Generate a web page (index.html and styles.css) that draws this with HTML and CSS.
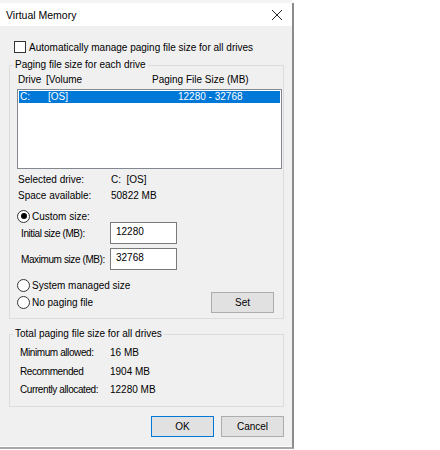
FILE: index.html
```html
<!DOCTYPE html>
<html>
<head>
<meta charset="utf-8">
<link rel="stylesheet" href="styles.css">
</head>
<body>
<div class="ghost"><span class="ghost-text"><span class="g1">Visual Effects</span><span class="g2">Advanced</span><span class="g3">Data Execution Prevention</span></span></div>
<div class="window">
  <div class="titlebar">
    <span class="title">Virtual Memory</span>
    <svg class="close" width="12" height="12" viewBox="0 0 12 12"><path d="M1 1 L11 11 M11 1 L1 11" stroke="#222" stroke-width="1"/></svg>
  </div>
  <div class="body">
    <div class="check-row"><span class="checkbox"></span><span>Automatically manage paging file size for all drives</span></div>
    <fieldset class="group group-a">
      <legend>Paging file size for each drive</legend>
      <div class="list-head"><span class="c1">Drive</span><span class="c2">[Volume</span><span class="c3">Paging File Size (MB)</span></div>
      <div class="listbox">
        <div class="lrow selected"><span class="c1">C:</span><span class="c2">[OS]</span><span class="c3">12280 - 32768</span></div>
      </div>
      <div class="info">
        <span>Selected drive:</span><span>C:&nbsp;&nbsp;[OS]</span>
        <span>Space available:</span><span>50822 MB</span>
      </div>
      <div class="radio-row r-custom"><span class="radio checked"></span><span>Custom size:</span></div>
      <div class="size-grid">
        <span class="tight">Initial size (MB):</span><div class="input">12280</div>
        <span class="tight">Maximum size (MB):</span><div class="input">32768</div>
      </div>
      <div class="radio-row r-system"><span class="radio"></span><span>System managed size</span></div>
      <div class="last-row">
        <div class="radio-row"><span class="radio"></span><span>No paging file</span></div>
        <div class="btn set">Set</div>
      </div>
    </fieldset>
    <fieldset class="group group-b">
      <legend>Total paging file size for all drives</legend>
      <div class="totals">
        <span class="tight">Minimum allowed:</span><span>16 MB</span>
        <span class="tight">Recommended</span><span>1904 MB</span>
        <span class="tight">Currently allocated:</span><span>12280 MB</span>
      </div>
    </fieldset>
    <div class="buttons">
      <div class="btn default">OK</div>
      <div class="btn">Cancel</div>
    </div>
  </div>
</div>
</body>
</html>
```

FILE: styles.css
```css
html, body {
  margin: 0;
  padding: 0;
  background: #ffffff;
}
body {
  font-family: "Liberation Sans", Arial, sans-serif;
  font-size: 10px;
  color: #000;
}
.ghost {
  height: 3px;
  width: 292px;
  overflow: hidden;
  background: #f4f4f4;
}
.ghost-text {
  display: flex;
  margin-top: -10px;
  line-height: 12px;
  color: #333;
  white-space: nowrap;
}
.g1 { margin-left: -4px; }
.g2 { margin-left: 16px; }
.g3 { margin-left: 14px; }

.window {
  width: 292px;
  border-right: 2px solid #8c8c8c;
  border-bottom: 2px solid #a8a8a8;
  background: #fff;
}
.titlebar {
  height: 23px;
  display: flex;
  align-items: center;
  justify-content: space-between;
  padding: 0 9px 0 6px;
  background: #fff;
  font-size: 10.5px;
}
.close { display: block; }
.body {
  background: #f0f0f0;
  height: 420px;
  box-sizing: border-box;
  padding: 13px 8px 0 9px;
  margin-bottom: 1px;
  display: flex;
  flex-direction: column;
}
.check-row {
  display: flex;
  align-items: center;
  height: 16px;
  padding-left: 5px;
}
.checkbox {
  width: 10px;
  height: 10px;
  border: 1px solid #333;
  background: #fff;
  margin-right: 3px;
}
.group {
  margin: 0;
  padding: 0 1px 0 7px;
  border: 1px solid #dcdcdc;
  min-width: 0;
}
.group legend {
  padding: 0 2px;
  margin-left: -4px;
  line-height: 16px;
}
.group-a {
  margin-top: 2px;
  padding-bottom: 6px;
}
.list-head {
  display: flex;
  line-height: 15px;
  margin-top: -1px;
  padding-left: 1px;
}
.c1 { width: 28px; }
.c2 { width: 106px; }
.listbox {
  margin-top: 2px;
  height: 80px;
  box-sizing: border-box;
  border: 1px solid #828790;
  background: #fff;
  padding: 1px;
}
.lrow {
  display: flex;
  height: 12px;
  line-height: 12px;
  padding-left: 1px;
}
.lrow .c2 { width: 130px; }
.lrow.selected {
  background: #0078d7;
  color: #fff;
}
.info {
  display: grid;
  grid-template-columns: 93px auto;
  line-height: 16px;
  margin-top: 3px;
  padding-left: 1px;
  white-space: nowrap;
}
.radio-row {
  display: flex;
  align-items: center;
  height: 14px;
  white-space: nowrap;
}
.radio {
  width: 11px;
  height: 11px;
  border: 1px solid #333;
  border-radius: 50%;
  background: #fff;
  margin-right: 2px;
  position: relative;
  box-sizing: content-box;
}
.radio.checked::after {
  content: "";
  position: absolute;
  left: 2.5px;
  top: 2.5px;
  width: 6px;
  height: 6px;
  border-radius: 50%;
  background: #000;
}
.r-custom { margin-top: 5px; }
.size-grid {
  display: grid;
  grid-template-columns: 89px 67px;
  row-gap: 4px;
  align-items: center;
  margin-top: -1px;
  padding-left: 4px;
  white-space: nowrap;
}
.tight { letter-spacing: -0.4px; }
.input {
  height: 22px;
  box-sizing: border-box;
  border: 1px solid #7a7a7a;
  background: #fff;
  padding: 2px 0 0 5px;
  line-height: 13px;
}
.r-system { margin-top: 8px; }
.last-row {
  display: flex;
  justify-content: space-between;
  align-items: center;
  margin-top: 0;
  height: 20px;
  padding-right: 8px;
}
.btn {
  height: 21px;
  box-sizing: border-box;
  border: 1px solid #adadad;
  background: #e1e1e1;
  display: flex;
  align-items: center;
  justify-content: center;
}
.set { width: 63px; }
.group-b {
  margin-top: 7px;
  padding-bottom: 6px;
}
.totals {
  display: grid;
  grid-template-columns: 90px auto;
  line-height: 18.5px;
  margin-top: 2px;
  padding-left: 3px;
  white-space: nowrap;
}
.buttons {
  display: flex;
  justify-content: flex-end;
  gap: 7px;
  margin-top: 9px;
}
.buttons .btn { width: 63px; }
.btn.default { border-color: #0078d7; }
```
